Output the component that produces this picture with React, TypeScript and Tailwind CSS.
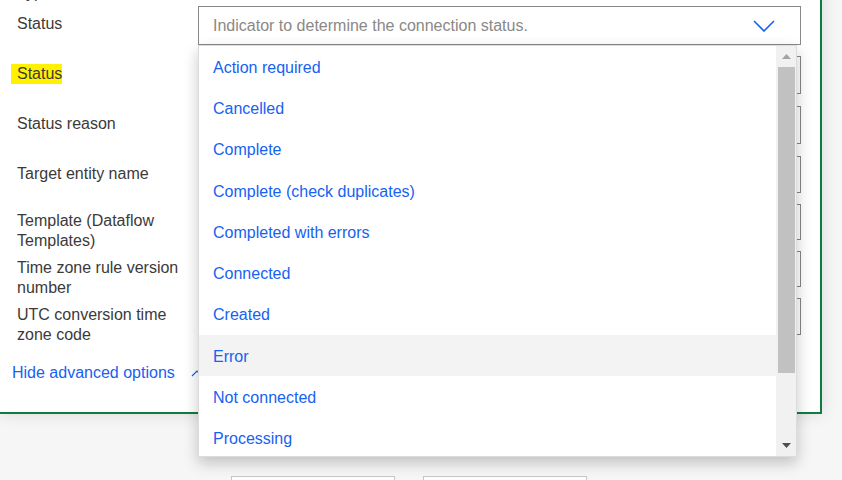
import React from 'react';

const OPTIONS = [
  'Action required',
  'Cancelled',
  'Complete',
  'Complete (check duplicates)',
  'Completed with errors',
  'Connected',
  'Created',
  'Error',
  'Not connected',
  'Processing',
];

// the open option set overlaying the form, with its fake scrollbar
const OptionList: React.FC<{ hovered: string }> = ({ hovered }) => (
  <div className="absolute left-[-1px] top-[38px] z-10 w-[599px] h-[412px] bg-white border border-[#dcdcdc] shadow-[0_6px_14px_rgba(0,0,0,0.22)] flex overflow-hidden">
    <ul className="flex-1 flex flex-col">
      {OPTIONS.map((o) => (
        <li
          key={o}
          className={`h-[41.3px] shrink-0 flex items-center pl-[14px] pt-[2px] text-[#1662f2] leading-[20px] ${
            o === hovered ? 'bg-[#f3f3f3]' : ''
          }`}
        >
          {o}
        </li>
      ))}
    </ul>
    <div className="w-[20px] bg-[#f1f1f1] flex flex-col">
      <div className="h-[21px] flex items-center justify-center">
        <svg width="9" height="5" viewBox="0 0 9 5">
          <polygon points="0,5 4.5,0 9,5" fill="#a3a3a3" />
        </svg>
      </div>
      <div className="h-[306px] ml-[2px] mr-[1px] bg-[#c1c1c1]" />
      <div className="flex-1" />
      <div className="h-[22px] flex items-center justify-center">
        <svg width="9" height="5" viewBox="0 0 9 5">
          <polygon points="0,0 9,0 4.5,5" fill="#505050" />
        </svg>
      </div>
    </div>
  </div>
);

const App: React.FC = () => {
  return (
    <div className="w-[842px] h-[480px] overflow-hidden bg-[#f6f6f6] font-['Liberation_Sans',Arial,sans-serif] text-[16px] text-[#3b3a39]">
      {/* Form card */}
      <div className="relative w-[822px] bg-white border-r-2 border-b-2 border-[#107c41] pl-[12px] pr-[19px] pb-[29px] shadow-[0_0_16px_rgba(0,0,0,0.12)]">
        {/* tail of the field above, mostly scrolled out */}
        <div className="-mt-[17px] h-[20px] pl-[5px] leading-[20px]">Type</div>

        {/* Status (option set, open) */}
        <div className="mt-[3px] flex items-center h-[39px]">
          <div className="w-[186px] shrink-0 pl-[5px] pr-[10px] pb-[3px] leading-[20px]">Status</div>
          <div className="relative flex-1 h-[39px] border border-[#8a8886] bg-white flex items-center pl-[14px] pr-[25px]">
            <span className="flex-1 text-[#8a8886]">Indicator to determine the connection status.</span>
            <svg width="22" height="12" viewBox="0 0 22 12" fill="none">
              <polyline points="1,1 11,11 21,1" stroke="#1662f2" strokeWidth="1.6" />
            </svg>
            <OptionList hovered="Error" />
          </div>
        </div>

        <div className="mt-[11px] flex items-center h-[38px]">
          <div className="w-[186px] shrink-0 pl-[5px] pr-[10px] pb-[2px] leading-[20px]">
            <span className="inline-block -ml-[6px] pl-[6px] bg-[#fff100]">Status</span>
          </div>
          <div className="flex-1 h-[38px] border border-[#8a8886] bg-white" />
        </div>

        <div className="mt-[12px] flex items-center h-[38px]">
          <div className="w-[186px] shrink-0 pl-[5px] pr-[10px] pb-[2px] leading-[20px]">Status reason</div>
          <div className="flex-1 h-[38px] border border-[#8a8886] bg-white" />
        </div>

        <div className="mt-[12px] flex items-center h-[37px]">
          <div className="w-[186px] shrink-0 pl-[5px] pr-[10px] pb-[2px] leading-[20px]">Target entity name</div>
          <div className="flex-1 h-[37px] border border-[#8a8886] bg-white" />
        </div>

        <div className="mt-[11px] flex items-start">
          <div className="w-[186px] shrink-0 pl-[5px] pr-[10px] pt-[7px] leading-[20px]">Template (Dataflow Templates)</div>
          <div className="flex-1 h-[36px] border border-[#8a8886] bg-white" />
        </div>

        <div className="flex items-start">
          <div className="w-[186px] shrink-0 pl-[5px] pr-[10px] pt-[7px] leading-[20px]">Time zone rule version number</div>
          <div className="flex-1 h-[36px] border border-[#8a8886] bg-white" />
        </div>

        <div className="flex items-start">
          <div className="w-[186px] shrink-0 pl-[5px] pr-[10px] pt-[7px] leading-[20px]">UTC conversion time zone code</div>
          <div className="flex-1 h-[37px] border border-[#8a8886] bg-white" />
        </div>

        <div className="mt-[18px] flex items-center leading-[20px] text-[#1662f2]">
          <span>Hide advanced options</span>
          <svg className="ml-[16px]" width="12" height="7" viewBox="0 0 12 7" fill="none">
            <polyline points="1,6 6,1 11,6" stroke="#1662f2" strokeWidth="1.2" />
          </svg>
        </div>
      </div>

      {/* footer buttons, cut off by the window */}
      <div className="mt-[62px] flex gap-[28px] pl-[231px]">
        <div className="w-[164px] h-[32px] border border-[#c8c6c4] bg-white" />
        <div className="w-[164px] h-[32px] border border-[#c8c6c4] bg-white" />
      </div>
    </div>
  );
};

export default App;
